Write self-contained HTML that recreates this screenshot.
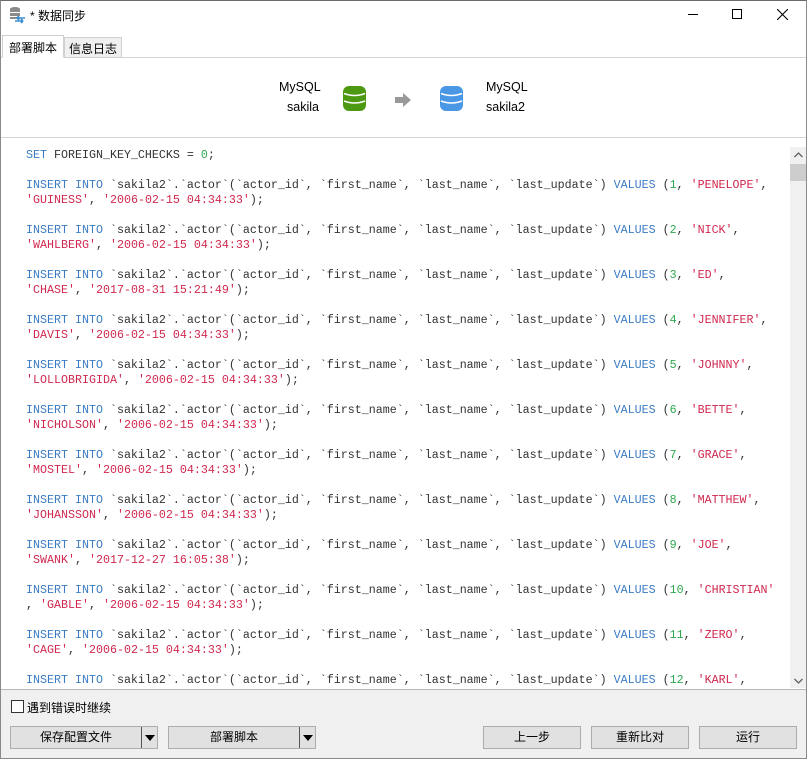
<!DOCTYPE html>
<html><head><meta charset="utf-8"><style>
*{margin:0;padding:0;box-sizing:border-box}
body{width:807px;height:759px;overflow:hidden;background:#fff;font-family:"Liberation Sans","Noto Sans CJK SC",sans-serif;font-size:12px;color:#000;position:relative}
.win{position:absolute;left:0;top:0;width:807px;height:759px;border:1px solid #8a8a8a;border-top-color:#6a6a6a}
.abs{position:absolute}
.title{left:30px;top:7px;font-size:12px}
.tab{top:36px;height:22px;font-size:12px;padding:3px 6px;border:1px solid #d0d0d0}
.code{position:absolute;left:1px;top:138px;width:788px;height:550px;overflow:hidden;background:#fff}
pre{position:absolute;left:25px;top:10px;font-family:"Liberation Mono","DejaVu Sans Mono",monospace;font-size:11.67px;line-height:15px;color:#333}
.k{color:#3b7cc4}.s{color:#d0284e}.n{color:#2fa84f}
.sb{left:790px;top:147px;width:16px;height:541px;background:#f0f0f0}
.bottom{left:1px;top:689px;width:805px;height:69px;background:#f0f0f0;border-top:1px solid #b8b8b8}
.btn{top:726px;height:23px;background:#e1e1e1;border:1px solid #adadad;font-size:12px;text-align:center;line-height:21px}
.dd{position:absolute;right:0;top:0;width:16px;height:21px;border-left:1px solid #555}
.dd:after{content:"";position:absolute;left:3px;top:8px;border-left:5px solid transparent;border-right:5px solid transparent;border-top:6px solid #000}
</style></head><body>
<div class="win"></div>
<svg class="abs" style="left:8px;top:6px" width="18" height="18" viewBox="0 0 18 18">
<ellipse cx="7" cy="3" rx="5" ry="2" fill="#8a8a8a"/><rect x="2" y="3" width="10" height="10" fill="#8a8a8a"/><rect x="2" y="6" width="10" height="1" fill="#fff"/><rect x="2" y="10" width="10" height="1" fill="#fff"/>
<path d="M9 12h8M9 12l2-2M9 12l2 2M7 15h8M15 15l-2-2M15 15l-2 2" stroke="#3a8fd0" stroke-width="1.6" fill="none"/></svg>
<div class="abs title">* 数据同步</div>
<div class="abs" style="left:688px;top:14px;width:10px;height:1px;background:#000"></div>
<div class="abs" style="left:732px;top:9px;width:10px;height:10px;border:1px solid #000"></div>
<svg class="abs" style="left:777px;top:9px" width="11" height="11"><path d="M0 0L11 11M11 0L0 11" stroke="#000" stroke-width="1.1"/></svg>
<div class="abs" style="left:1px;top:57px;width:805px;height:1px;background:#d4d4d4"></div>
<div class="abs tab" style="left:2px;top:35px;height:23px;background:#fff;border-bottom-color:#fff">部署脚本</div>
<div class="abs tab" style="left:64px;top:37px;height:21px;background:#f0f0f0;padding:2px 4px">信息日志</div>
<div class="abs" style="left:279px;top:80px;font-size:12.5px">MySQL</div>
<div class="abs" style="left:287px;top:100px;font-size:12.5px">sakila</div>
<div class="abs" style="left:486px;top:80px;font-size:12.5px">MySQL</div>
<div class="abs" style="left:486px;top:100px;font-size:12.5px">sakila2</div>
<svg class="abs" style="left:343px;top:86px" width="23" height="25" viewBox="0 0 23 25"><rect x="0" y="0" width="23" height="25" rx="6" fill="#4d9a12"/><path d="M1 7.5q10.5 4 21 0M1 15q10.5 4 21 0" stroke="#fff" stroke-width="1.6" fill="none"/></svg>
<svg class="abs" style="left:395px;top:93px" width="16" height="14"><path d="M0 4h8V0l8 7-8 7V10H0z" fill="#999"/></svg>
<svg class="abs" style="left:440px;top:86px" width="23" height="25" viewBox="0 0 23 25"><rect x="0" y="0" width="23" height="25" rx="6" fill="#4a97e6"/><path d="M1 7.5q10.5 4 21 0M1 15q10.5 4 21 0" stroke="#fff" stroke-width="1.6" fill="none"/></svg>
<div class="abs" style="left:1px;top:137px;width:805px;height:1px;background:#d4d4d4"></div>
<div class="code"><pre><span class="k">SET</span> FOREIGN_KEY_CHECKS = <span class="n">0</span>;

<span class="k">INSERT INTO</span> `sakila2`.`actor`(`actor_id`, `first_name`, `last_name`, `last_update`) <span class="k">VALUES</span> (<span class="n">1</span>, <span class="s">'PENELOPE'</span>,
<span class="s">'GUINESS'</span>, <span class="s">'2006-02-15 04:34:33'</span>);

<span class="k">INSERT INTO</span> `sakila2`.`actor`(`actor_id`, `first_name`, `last_name`, `last_update`) <span class="k">VALUES</span> (<span class="n">2</span>, <span class="s">'NICK'</span>,
<span class="s">'WAHLBERG'</span>, <span class="s">'2006-02-15 04:34:33'</span>);

<span class="k">INSERT INTO</span> `sakila2`.`actor`(`actor_id`, `first_name`, `last_name`, `last_update`) <span class="k">VALUES</span> (<span class="n">3</span>, <span class="s">'ED'</span>,
<span class="s">'CHASE'</span>, <span class="s">'2017-08-31 15:21:49'</span>);

<span class="k">INSERT INTO</span> `sakila2`.`actor`(`actor_id`, `first_name`, `last_name`, `last_update`) <span class="k">VALUES</span> (<span class="n">4</span>, <span class="s">'JENNIFER'</span>,
<span class="s">'DAVIS'</span>, <span class="s">'2006-02-15 04:34:33'</span>);

<span class="k">INSERT INTO</span> `sakila2`.`actor`(`actor_id`, `first_name`, `last_name`, `last_update`) <span class="k">VALUES</span> (<span class="n">5</span>, <span class="s">'JOHNNY'</span>,
<span class="s">'LOLLOBRIGIDA'</span>, <span class="s">'2006-02-15 04:34:33'</span>);

<span class="k">INSERT INTO</span> `sakila2`.`actor`(`actor_id`, `first_name`, `last_name`, `last_update`) <span class="k">VALUES</span> (<span class="n">6</span>, <span class="s">'BETTE'</span>,
<span class="s">'NICHOLSON'</span>, <span class="s">'2006-02-15 04:34:33'</span>);

<span class="k">INSERT INTO</span> `sakila2`.`actor`(`actor_id`, `first_name`, `last_name`, `last_update`) <span class="k">VALUES</span> (<span class="n">7</span>, <span class="s">'GRACE'</span>,
<span class="s">'MOSTEL'</span>, <span class="s">'2006-02-15 04:34:33'</span>);

<span class="k">INSERT INTO</span> `sakila2`.`actor`(`actor_id`, `first_name`, `last_name`, `last_update`) <span class="k">VALUES</span> (<span class="n">8</span>, <span class="s">'MATTHEW'</span>,
<span class="s">'JOHANSSON'</span>, <span class="s">'2006-02-15 04:34:33'</span>);

<span class="k">INSERT INTO</span> `sakila2`.`actor`(`actor_id`, `first_name`, `last_name`, `last_update`) <span class="k">VALUES</span> (<span class="n">9</span>, <span class="s">'JOE'</span>,
<span class="s">'SWANK'</span>, <span class="s">'2017-12-27 16:05:38'</span>);

<span class="k">INSERT INTO</span> `sakila2`.`actor`(`actor_id`, `first_name`, `last_name`, `last_update`) <span class="k">VALUES</span> (<span class="n">10</span>, <span class="s">'CHRISTIAN'</span>
, <span class="s">'GABLE'</span>, <span class="s">'2006-02-15 04:34:33'</span>);

<span class="k">INSERT INTO</span> `sakila2`.`actor`(`actor_id`, `first_name`, `last_name`, `last_update`) <span class="k">VALUES</span> (<span class="n">11</span>, <span class="s">'ZERO'</span>,
<span class="s">'CAGE'</span>, <span class="s">'2006-02-15 04:34:33'</span>);

<span class="k">INSERT INTO</span> `sakila2`.`actor`(`actor_id`, `first_name`, `last_name`, `last_update`) <span class="k">VALUES</span> (<span class="n">12</span>, <span class="s">'KARL'</span>,</pre></div>
<div class="abs sb"></div>
<div class="abs" style="left:790px;top:164px;width:16px;height:17px;background:#cdcdcd"></div>
<svg class="abs" style="left:794px;top:152px" width="9" height="6"><path d="M0.5 5L4.5 1L8.5 5" stroke="#606060" stroke-width="1.3" fill="none"/></svg>
<svg class="abs" style="left:794px;top:678px" width="9" height="6"><path d="M0.5 1L4.5 5L8.5 1" stroke="#606060" stroke-width="1.3" fill="none"/></svg>
<div class="abs bottom"></div>
<div class="abs" style="left:11px;top:700px;width:13px;height:13px;border:1px solid #333;background:#fff"></div>
<div class="abs" style="left:27px;top:699px;font-size:12px">遇到错误时继续</div>
<div class="abs btn" style="left:10px;width:148px">保存配置文件<span style="display:inline-block;width:16px"></span><div class="dd"></div></div>
<div class="abs btn" style="left:168px;width:148px">部署脚本<span style="display:inline-block;width:16px"></span><div class="dd"></div></div>
<div class="abs btn" style="left:483px;width:98px">上一步</div>
<div class="abs btn" style="left:591px;width:98px">重新比对</div>
<div class="abs btn" style="left:699px;width:98px">运行</div>
</body></html>
